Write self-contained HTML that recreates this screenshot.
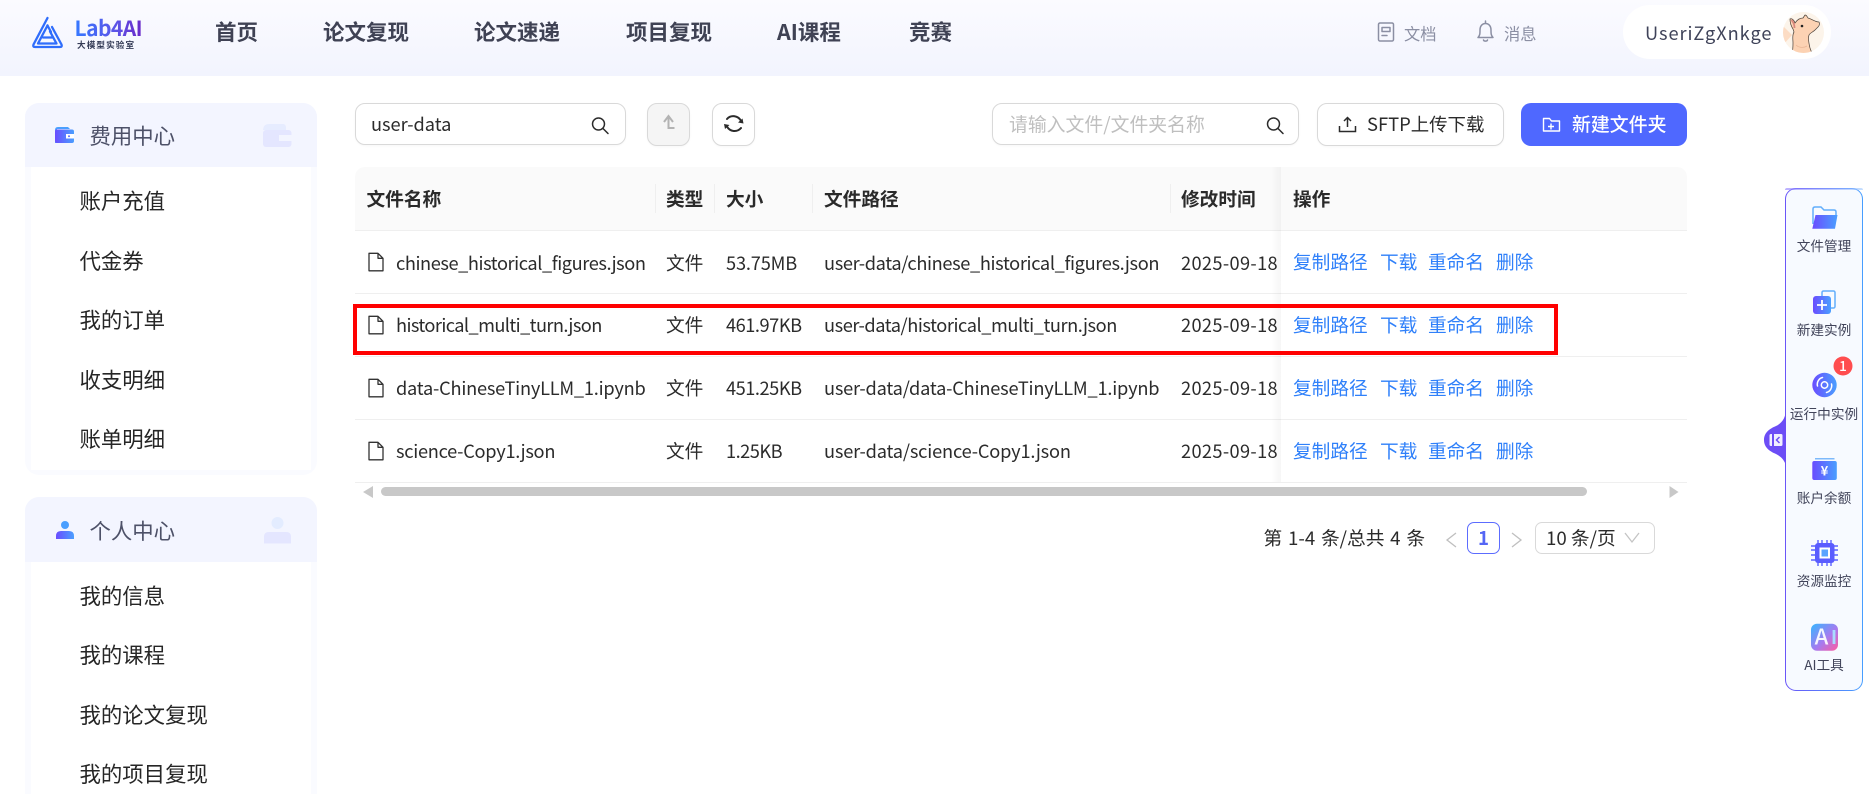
<!DOCTYPE html>
<html lang="zh"><head><meta charset="utf-8"><title>Lab4AI</title>
<style>
*{box-sizing:border-box}
html,body{margin:0;padding:0;width:1869px;height:794px;overflow:hidden;background:#fff;font-family:"Noto Sans CJK SC","Liberation Sans",sans-serif;color:#2b2b2b}
#w{position:absolute;left:0;top:0;width:1869px;height:794px;overflow:hidden}
.a{position:absolute}
.t{position:absolute;white-space:nowrap;height:30px;line-height:30px;font-size:18.7px}
.x{font-size:18.2px}
.d{font-size:18.2px;letter-spacing:.36px}
.nav{font-size:21.5px;font-weight:700;color:#3f4254}
.si{font-size:21.4px;color:#262626;left:79.500px}
.sh{font-size:21.4px;color:#4d5168;left:89.500px}
.th{font-weight:700;top:184px;color:#2a2a2a}
.sep{position:absolute;top:184px;height:29px;width:1px;background:#efefef}
.line{position:absolute;left:355px;width:1332px;height:1px;background:#efefef}
.l{color:#2f80fa}
.lab{font-size:13.65px;color:#41445a;width:78px;text-align:center;left:1785px}
.btn{position:absolute;background:#fff;border:1.3px solid #d9d9d9;border-radius:10px;box-shadow:0 1px 2px rgba(0,0,0,.03)}
</style></head><body><div id="w">
<div class="a" style="left:0;top:0;width:1869px;height:76px;background:linear-gradient(180deg,#fbfbff,#f2f4fe)"></div>

<span class="t" style="left:74.500px;top:13px;font-size:21px;font-weight:700;letter-spacing:-.55px;background:linear-gradient(90deg,#3578ff,#5b55e8 60%,#6a28c8);-webkit-background-clip:text;background-clip:text;color:transparent">Lab4AI</span>
<span class="t" style="left:77px;top:30px;font-size:8.6px;font-weight:700;letter-spacing:1.1px;color:#333a55">大模型实验室</span>

<span class="t nav" style="left:215px;top:17px">首页</span>
<span class="t nav" style="left:323px;top:17px">论文复现</span>
<span class="t nav" style="left:474px;top:17px">论文速递</span>
<span class="t nav" style="left:626px;top:17px">项目复现</span>
<span class="t nav" style="left:777px;top:17px">AI课程</span>
<span class="t nav" style="left:909px;top:17px">竞赛</span>
<span class="t" style="left:1404px;top:18px;font-size:16.25px;color:#8b8fa3">文档</span>
<span class="t" style="left:1504px;top:18px;font-size:16.25px;color:#8b8fa3">消息</span>
<div class="a" style="left:1623px;top:5px;width:208px;height:54px;background:#fff;border-radius:27px"></div>
<span class="t x" style="left:1645px;top:18px;color:#3f4359;letter-spacing:.95px">UseriZgXnkge</span>

<!-- sidebar -->
<div class="a" style="left:25px;top:103px;width:292px;height:372px;border-radius:14px;background:#fafbff"></div>
<div class="a" style="left:25px;top:103px;width:292px;height:64px;border-radius:14px 14px 0 0;background:#f3f5ff"></div>
<div class="a" style="left:31px;top:167px;width:280px;height:303px;background:#fff"></div>
<span class="t sh" style="top:121px">费用中心</span>
<span class="t si" style="top:185.500px">账户充值</span>
<span class="t si" style="top:245.500px">代金券</span>
<span class="t si" style="top:305px">我的订单</span>
<span class="t si" style="top:364.500px">收支明细</span>
<span class="t si" style="top:424px">账单明细</span>

<div class="a" style="left:25px;top:497px;width:292px;height:297px;border-radius:14px 14px 0 0;background:#fafbff"></div>
<div class="a" style="left:25px;top:497px;width:292px;height:65px;border-radius:14px 14px 0 0;background:#f3f5ff"></div>
<div class="a" style="left:31px;top:562px;width:280px;height:232px;background:#fff"></div>
<span class="t sh" style="top:516px">个人中心</span>
<span class="t si" style="top:580.500px">我的信息</span>
<span class="t si" style="top:640px">我的课程</span>
<span class="t si" style="top:699.500px">我的论文复现</span>
<span class="t si" style="top:759px">我的项目复现</span>

<!-- toolbar -->
<div class="btn" style="left:355px;top:103px;width:271px;height:42px"></div>
<span class="t x" style="left:371px;top:109px">user-data</span>
<div class="btn" style="left:647px;top:103px;width:43px;height:43px;background:#f5f5f5"></div>
<div class="btn" style="left:712px;top:103px;width:43px;height:43px"></div>
<div class="btn" style="left:992px;top:103px;width:307px;height:42px"></div>
<span class="t" style="left:1009px;top:109px;font-size:18.85px;color:#bfbfbf">请输入文件/文件夹名称</span>
<div class="btn" style="left:1317px;top:103px;width:187px;height:43px"></div>
<span class="t" style="left:1367px;top:109px;font-size:18.4px">SFTP上传下载</span>
<div class="a" style="left:1521px;top:103px;width:166px;height:43px;border-radius:10px;background:#4f68ff"></div>
<span class="t" style="left:1572px;top:109px;font-size:18.9px;color:#fff;font-weight:500">新建文件夹</span>

<!-- table -->
<div class="a" style="left:355px;top:167px;width:1332px;height:63px;border-radius:10px 10px 0 0;background:#fafafa"></div>
<div class="line" style="top:230px"></div><div class="line" style="top:293px"></div><div class="line" style="top:356px"></div><div class="line" style="top:419px"></div><div class="line" style="top:482px"></div>
<div class="sep" style="left:655px"></div><div class="sep" style="left:714px"></div><div class="sep" style="left:812px"></div><div class="sep" style="left:1170px"></div>
<div class="a" style="left:1271px;top:167px;width:10px;height:315px;background:linear-gradient(90deg,rgba(0,0,0,0),rgba(0,0,0,.035))"></div>

<span class="t th" style="left:366.500px">文件名称</span><span class="t th" style="left:666px">类型</span><span class="t th" style="left:726px">大小</span><span class="t th" style="left:824px">文件路径</span><span class="t th" style="left:1181px">修改时间</span><span class="t th" style="left:1293px">操作</span>

<span class="t x" style="left:396px;top:248px;letter-spacing:-.42px">chinese_historical_figures.json</span><span class="t" style="left:666px;top:248px">文件</span><span class="t x" style="left:726px;top:248px;letter-spacing:-.15px">53.75MB</span><span class="t x" style="left:824px;top:248px;letter-spacing:-.35px">user-data/chinese_historical_figures.json</span><span class="t d" style="left:1181px;top:248px">2025-09-18</span>
<span class="t l" style="left:1293px;top:247px">复制路径</span><span class="t l" style="left:1380px;top:247px">下载</span><span class="t l" style="left:1428px;top:247px">重命名</span><span class="t l" style="left:1496px;top:247px">删除</span>

<span class="t x" style="left:396px;top:310px;letter-spacing:-.58px">historical_multi_turn.json</span><span class="t" style="left:666px;top:310px">文件</span><span class="t x" style="left:726px;top:310px;letter-spacing:-.45px">461.97KB</span><span class="t x" style="left:824px;top:310px;letter-spacing:-.43px">user-data/historical_multi_turn.json</span><span class="t d" style="left:1181px;top:310px">2025-09-18</span>
<span class="t l" style="left:1293px;top:310px">复制路径</span><span class="t l" style="left:1380px;top:310px">下载</span><span class="t l" style="left:1428px;top:310px">重命名</span><span class="t l" style="left:1496px;top:310px">删除</span>

<span class="t x" style="left:396px;top:373px;letter-spacing:-.22px">data-ChineseTinyLLM_1.ipynb</span><span class="t" style="left:666px;top:373px">文件</span><span class="t x" style="left:726px;top:373px;letter-spacing:-.45px">451.25KB</span><span class="t x" style="left:824px;top:373px;letter-spacing:-.19px">user-data/data-ChineseTinyLLM_1.ipynb</span><span class="t d" style="left:1181px;top:373px">2025-09-18</span>
<span class="t l" style="left:1293px;top:373px">复制路径</span><span class="t l" style="left:1380px;top:373px">下载</span><span class="t l" style="left:1428px;top:373px">重命名</span><span class="t l" style="left:1496px;top:373px">删除</span>

<span class="t x" style="left:396px;top:436px;letter-spacing:-.27px">science-Copy1.json</span><span class="t" style="left:666px;top:436px">文件</span><span class="t x" style="left:726px;top:436px;letter-spacing:-.5px">1.25KB</span><span class="t x" style="left:824px;top:436px;letter-spacing:-.17px">user-data/science-Copy1.json</span><span class="t d" style="left:1181px;top:436px">2025-09-18</span>
<span class="t l" style="left:1293px;top:436px">复制路径</span><span class="t l" style="left:1380px;top:436px">下载</span><span class="t l" style="left:1428px;top:436px">重命名</span><span class="t l" style="left:1496px;top:436px">删除</span>

<!-- scrollbar -->
<div class="a" style="left:381px;top:487px;width:1206px;height:9px;border-radius:5px;background:#c8c8c8"></div>

<!-- pagination -->
<span class="t" style="left:1263.500px;top:523px;word-spacing:1.6px">第 1-4 条/总共 4 条</span>
<div class="a" style="left:1467px;top:522px;width:33px;height:32px;border:1.3px solid #5c6cff;border-radius:7px"></div>
<span class="t" style="left:1467px;width:33px;text-align:center;top:523px;font-weight:700;color:#5566f5">1</span>
<div class="a" style="left:1535px;top:522px;width:120px;height:32px;border:1.3px solid #d9d9d9;border-radius:7px"></div>
<span class="t" style="left:1546px;top:523px">10 条/页</span>

<!-- right panel -->
<div class="a" style="left:1785px;top:188px;width:78px;height:503px;border-radius:11px;padding:1.3px;background:linear-gradient(90deg,#6a55f8,#479fff)"><div style="width:100%;height:100%;background:#f7faff;border-radius:10px"></div></div>
<div class="a" style="left:1785px;top:188px;width:78px;height:2px;background:linear-gradient(90deg,#8f7cff,#9cc8ff);border-radius:10px 10px 0 0;opacity:.6"></div>
<span class="t lab" style="top:230px">文件管理</span>
<span class="t lab" style="top:314px">新建实例</span>
<span class="t lab" style="top:398px">运行中实例</span>
<span class="t lab" style="top:482px">账户余额</span>
<span class="t lab" style="top:565px">资源监控</span>
<span class="t lab" style="top:648.500px">AI工具</span>

<!-- icons -->
<svg class="a" style="left:0;top:0" width="1869" height="794" viewBox="0 0 1869 794" fill="none">
<defs>
<linearGradient id="g" x1="0" x2="1" y1="0" y2="0"><stop offset="0" stop-color="#6a4cff"/><stop offset="1" stop-color="#4a9fff"/></linearGradient>
<linearGradient id="ai" x1="0" x2="1" y1="0" y2="1"><stop offset="0" stop-color="#35b7ff"/><stop offset=".55" stop-color="#a57bf0"/><stop offset="1" stop-color="#ff5b9f"/></linearGradient>
<clipPath id="av"><circle cx="1803.5" cy="32.5" r="20.5"/></clipPath>
</defs>
<!-- logo -->
<g stroke="#2f6dfb" stroke-width="2.3" stroke-linejoin="round" stroke-linecap="round">
<path d="M47.5 18 L33.5 44.5 Q32.5 47 35 47 H60 Q62.5 47 61.5 44.5 L52 27"/>
<path d="M47.5 25.5 L38 43.5 H56.5 L50 31.5"/>
<path d="M43 37.5 H52.5 M47.5 25.5 L51 32"/>
</g>
<!-- doc & bell -->
<g stroke="#8b8fa3" stroke-width="1.5" stroke-linecap="round" stroke-linejoin="round">
<rect x="1378.5" y="23" width="15" height="18" rx="1.5"/><path d="M1382 27.5h8v4h-8z M1382 35.5h5"/>
<path d="M1478 37.5c2-2 2-4 2-7.5 0-4 2.300-6.500 5.500-6.500s5.500 2.500 5.500 6.500c0 3.500 0 5.500 2 7.500z M1485.500 21v2 M1483.500 40c.500 1.500 3.500 1.500 4 0"/>
</g>
<!-- avatar -->
<g clip-path="url(#av)">
<rect x="1783" y="12" width="41" height="41" fill="#fcf4ea"/>
<path d="M1783 26l9 9-9 10z" fill="#fcdcc4"/>
<path d="M1813 12l11 12v-12z" fill="#fcdcc4"/>
<path d="M1792 53c1-3 1-6 1-10s-1-8 1-11l-1-3c-2-3-3-7-3-10 2-1 4 1 5 4 2-3 5-5 8-5l2-3c2 0 2 2 3 3 4 1 7 4 11 4 1 2 0 4-1 5l-3 3c-2 2-5 3-6 5-1 3 0 9 1 13l3 8z" fill="#fcd2b3" stroke="#4a4038" stroke-width=".7" stroke-linejoin="round"/>
<path d="M1791.500 20c2 2 3 4 3 8" stroke="#d9877c" stroke-width="1.800"/>
<circle cx="1802" cy="26" r="1.300" fill="#222"/>
<path d="M1796 45c3 3 8 3 11 1" stroke="#e9b595" stroke-width=".8"/>
</g>
<!-- wallets -->
<path d="M55 130q0-3 3-3h10l2 2h-13v14h-2z" fill="#4a9fff"/>
<rect x="55" y="129.500" width="19" height="13.500" rx="2" fill="url(#g)"/><rect x="66" y="134" width="8" height="4.500" fill="#fff"/><circle cx="69" cy="136.300" r="1" fill="#5c6cff"/>
<path d="M263 131q0-7 6-7h14q3 0 3 4v2h-23z" fill="#e6ecff"/>
<rect x="263" y="130" width="28.500" height="17" rx="3" fill="#e4e6ff"/><rect x="279" y="135" width="12.500" height="6" fill="#f3f5ff"/>
<!-- persons -->
<circle cx="65" cy="525" r="4" fill="#4a9fff"/><path d="M56 539v-3q0-5 5-5h8q5 0 5 5v3z" fill="url(#g)"/>
<circle cx="277.500" cy="523" r="6" fill="#e3ecff"/><path d="M264 543.500v-7q0-4.500 5-4.500h17q5 0 5 4.500v7z" fill="#e4e6ff"/>
<!-- search -->
<g stroke="#2b2b2b" stroke-width="1.500" stroke-linecap="round"><circle cx="598.500" cy="124" r="6"/><path d="M603 128.500l5 5"/><circle cx="1273.500" cy="124" r="6"/><path d="M1278 128.500l5 5"/></g>
<!-- up arrow -->
<path d="M664 122l4.500-6 4.500 6M668.500 117v11h6" stroke="#b3b3b3" stroke-width="2"/>
<!-- refresh -->
<g stroke="#2b2b2b" stroke-width="2" stroke-linecap="round"><path d="M727 119a8.500 8.500 0 0 1 14 2"/><path d="M741 128a8.500 8.500 0 0 1-14-1.500"/></g>
<path d="M743.500 123.500l-5.500-1 4.500-4zM724 124l5.500 1-4.500 4z" fill="#2b2b2b"/>
<!-- upload -->
<path d="M1339.500 126v5.500h16V126M1347.500 127v-9M1344 121l3.500-3.500 3.500 3.500" stroke="#2b2b2b" stroke-width="1.500"/>
<!-- new folder -->
<path d="M1543.500 118.500h6l2 2.500h8v10h-16zM1548 126.500h6M1551 123.500v6" stroke="#fff" stroke-width="1.400" stroke-linejoin="round"/>
<!-- file icons -->
<g stroke="#333" stroke-width="1.300" stroke-linejoin="round">
<path d="M369 253.300h9l5 5v12.500h-14zM378 253.300v5h5"/>
<path d="M369 316.300h9l5 5v12.500h-14zM378 316.300v5h5"/>
<path d="M369 379.300h9l5 5v12.500h-14zM378 379.300v5h5"/>
<path d="M369 442.300h9l5 5v12.500h-14zM378 442.300v5h5"/>
</g>
<!-- scroll arrows -->
<path d="M373 486v12l-10-6z" fill="#c8c8c8"/><path d="M1669.500 486v12l9-6z" fill="#c8c8c8"/>
<!-- pagination arrows -->
<path d="M1456 533l-9 7 9 7" stroke="#bfbfbf" stroke-width="1.300"/><path d="M1512 533l9 7-9 7" stroke="#bfbfbf" stroke-width="1.300"/>
<path d="M1625 533l7 9 7-9" stroke="#c4c4c4" stroke-width="1.300"/>
<!-- tab -->
<path d="M1786 408c0 10-4 15-10 18-7 3-12 7-12 14s5 11 12 14c6 3 10 8 10 14z" fill="#6c4df6"/>
<rect x="1769.500" y="434" width="13" height="12" rx="1.500" fill="#f0eeff"/><rect x="1772" y="434" width="2" height="12" fill="#6c4df6"/><path d="M1779.500 437l-3 3 3 3" stroke="#6c4df6" stroke-width="1.500"/>
<!-- panel icons -->
<path d="M1813 224v-15q0-2 2-2h6l3 3h10q2 0 2 2v3" stroke="#62aefc" stroke-width="1.500"/>
<path d="M1815.500 215H1837.500L1835 228.700H1812.300z" fill="url(#g)"/>
<rect x="1822" y="291" width="13" height="17" rx="1.500" stroke="#62aefc" stroke-width="1.500"/>
<rect x="1813" y="296" width="18" height="18" rx="3" fill="url(#g)"/><path d="M1822 300v10M1817 305h10" stroke="#fff" stroke-width="1.800"/>
<circle cx="1824.500" cy="385" r="12.200" fill="url(#g)"/><circle cx="1824.500" cy="385" r="3.200" stroke="#fff" stroke-width="1.500"/>
<path d="M1817.500 386a7 7 0 0 1 5-8.500M1831.500 384a7 7 0 0 1-5 8.500" stroke="#fff" stroke-width="1.500" stroke-linecap="round"/>
<circle cx="1843" cy="366" r="9.500" fill="#ff4d4f"/>
<text x="1843" y="371" font-size="13.500" font-weight="500" fill="#fff" text-anchor="middle" font-family="Noto Sans CJK SC,sans-serif">1</text>
<rect x="1815" y="458" width="19.500" height="1.500" fill="#7db9fb"/>
<rect x="1812.300" y="461" width="24.500" height="19" rx="2" fill="url(#g)"/>
<text x="1824.500" y="475.500" font-size="13" font-weight="700" fill="#fff" text-anchor="middle" font-family="Noto Sans CJK SC,sans-serif">¥</text>
<path d="M1818 540v26M1822 540v26M1827 540v26M1831 540v26M1811 546h27M1811 550h27M1811 555h27M1811 560h27" stroke="#5a62ff" stroke-width="1.400"/>
<rect x="1815" y="543" width="19.500" height="20" rx="3" fill="#5a5cff"/><rect x="1819.500" y="547.500" width="10.500" height="11" fill="#fff"/><rect x="1821.500" y="549.500" width="6.500" height="7" fill="#5aa4ff"/>
<rect x="1811" y="623.700" width="27" height="27" rx="6" fill="url(#ai)"/>
<text x="1821.500" y="644.500" font-size="22" font-weight="500" fill="#fff" fill-opacity=".92" text-anchor="middle" font-family="Noto Sans CJK SC,sans-serif">A</text>
<text x="1834" y="644" font-size="19" font-weight="700" fill="#a9dcff" text-anchor="middle" font-family="Noto Sans CJK SC,sans-serif">I</text>
</svg>

<!-- red annotation -->
<div class="a" style="left:353px;top:304px;width:1205px;height:51px;border:4px solid #f00"></div>
</div></body></html>
